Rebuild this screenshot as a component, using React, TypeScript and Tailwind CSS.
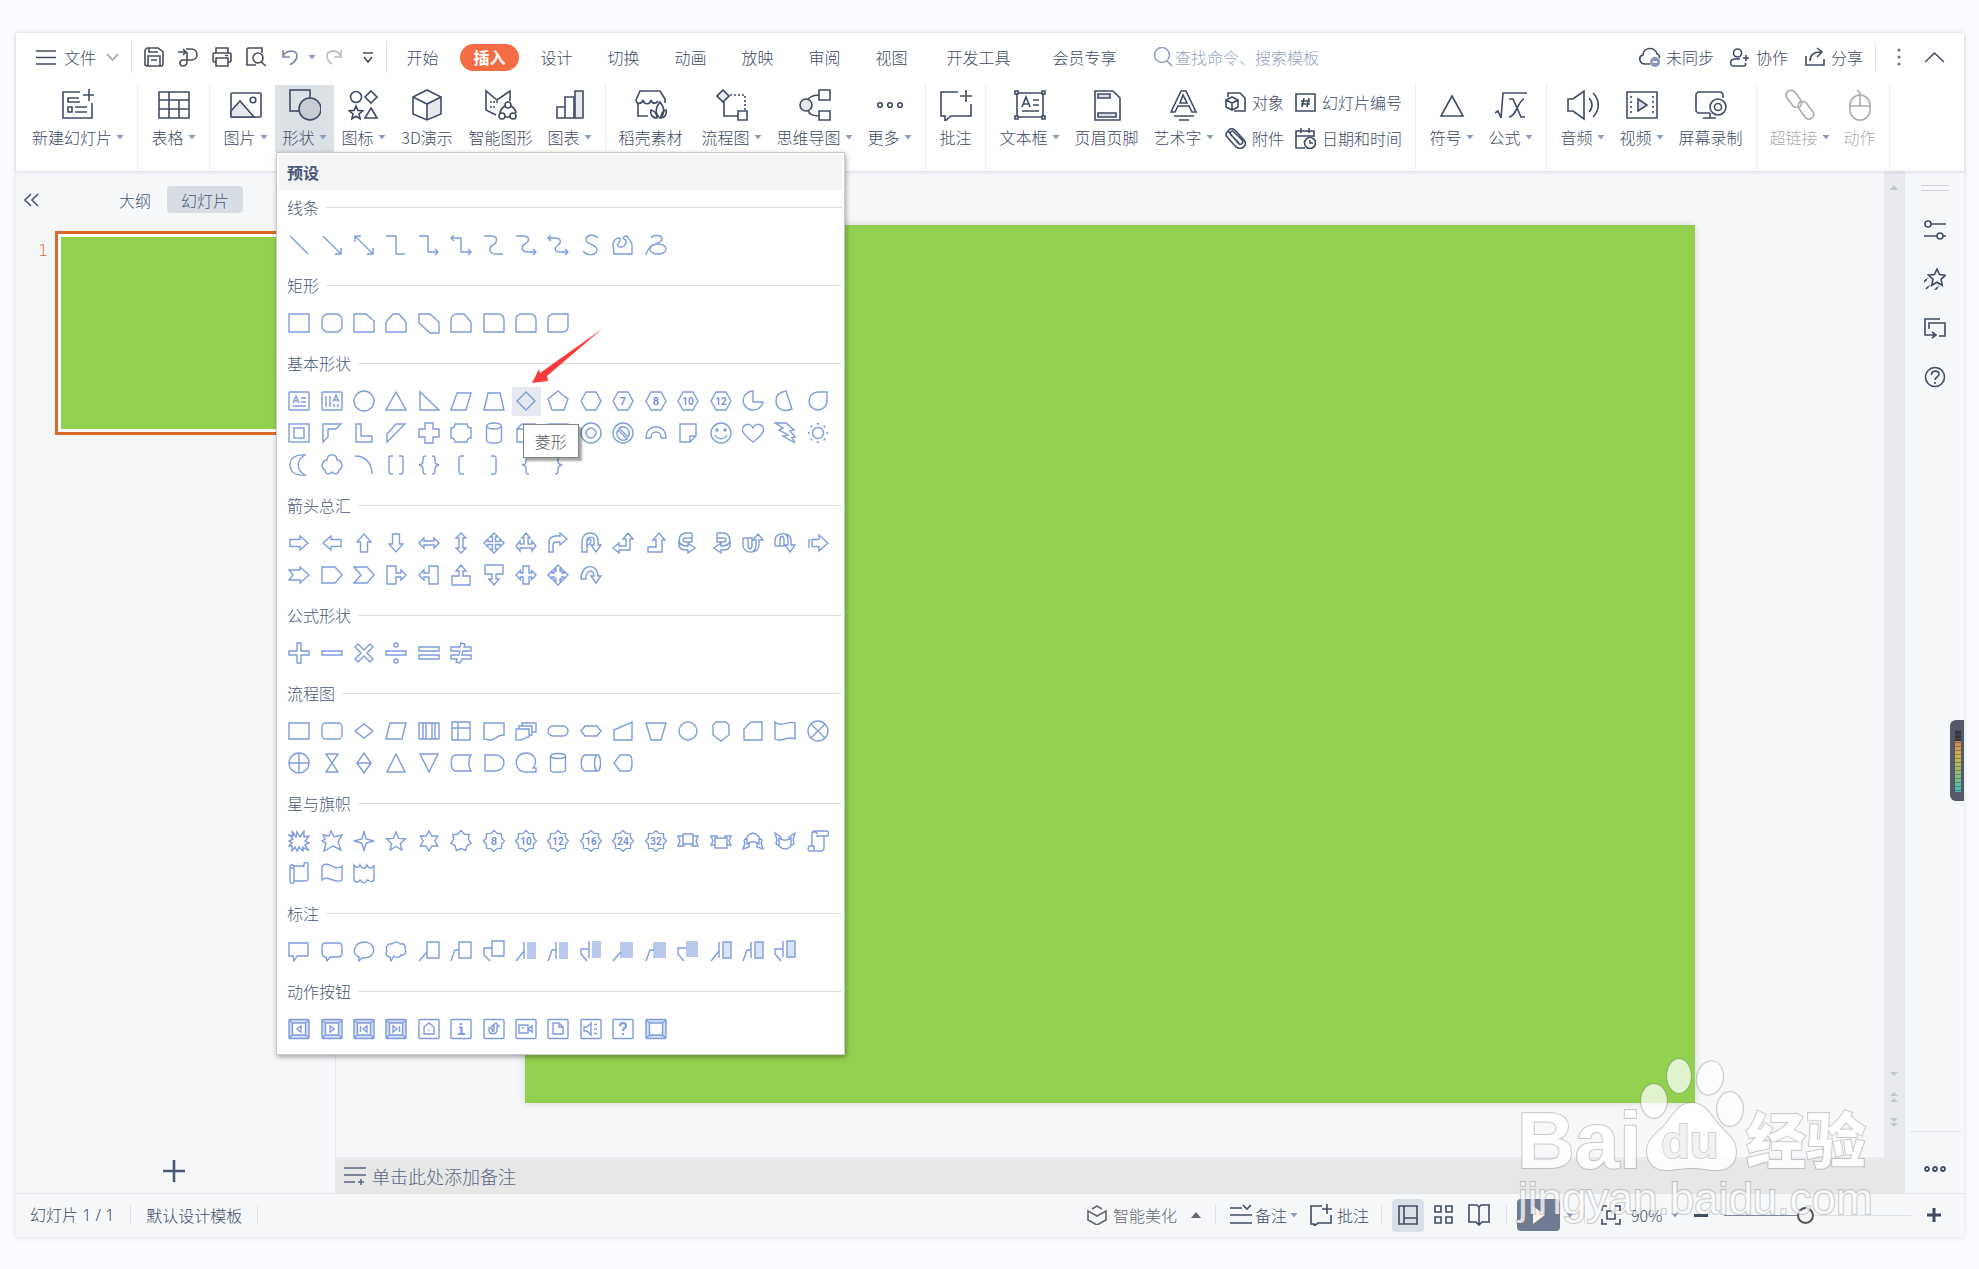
import React from "react";

type Kids = { children: React.ReactNode };

const star = (n: number, outer: number, inner: number, cx = 11, cy = 11) =>
  Array.from({ length: n * 2 }, (_, i) => {
    const r = i % 2 ? inner : outer;
    const a = (Math.PI * i) / n - Math.PI / 2;
    return `${(cx + r * Math.cos(a)).toFixed(1)},${(cy + r * Math.sin(a)).toFixed(1)}`;
  }).join(" ");

const p = (d: string) => <path d={d} />;

const turn = (deg: number, d: string) => (
  <path d={d} transform={`rotate(${deg} 11 11)`} />
);

const flip = (node: React.ReactNode) => (
  <g transform="translate(22 0) scale(-1 1)">{node}</g>
);

const num = (n: string) => (
  <text
    x="11"
    y="15"
    textAnchor="middle"
    fontSize={n.length > 1 ? 10 : 11}
    fontWeight="600"
    fill="#6f8fd4"
    stroke="none"
    fontFamily="Roboto, sans-serif"
  >
    {n}
  </text>
);

const hex = (n?: string) => (
  <>
    <path d="M6 2h10l5 9-5 9H6l-5-9z" />
    {n && num(n)}
  </>
);

const badge = (n: string) => (
  <>
    <polygon points={star(8, 10.5, 8.2)} />
    {num(n)}
  </>
);

const frame = (d: string, deep = false, weight = 1.4) => (
  <>
    <rect x="1" y="1.500" width="20" height="19" rx="1" fill={deep ? "#d3ddf4" : "none"} />
    {deep && <path d="M4.500 5h13v12h-13zM1 2l3.500 3M21 2l-3.500 3M1 20l3.500-3M21 20l-3.500-3" fill="#fff" />}
    <path d={d} strokeWidth={weight} />
  </>
);

const rightArrow = "M2 7.500h10V4l8 7-8 7v-3.500H2z";
const leftRight = "M1 11l5-5v3h10V6l5 5-5 5v-3H6v3z";
const curvedArrow =
  "M15 1H9C0 1 1 15 4 17c2 1 4 1 7 1v3l7-5-7-5v3C6 14 3 13 2 9M15 1v5H9c-4 0-4 4 0 4h6z";

const lines = [
  p("M2 2l18 18"),
  p("M2 2l18 18M20 14v6h-6"),
  p("M2 2l18 18M20 14v6h-6M2 8V2h6"),
  p("M1 2h10v18h9"),
  p("M1 2h9v16h10M17 15l3 3-3 3"),
  p("M1 4h10v14h10M4 1L1 4l3 3M18 15l3 3-3 3"),
  p("M1 2h7c8 0 6 7 2 9s-5 9 3 9h7"),
  p("M1 2h7c8 0 6 6 2 8s-4 8 3 8h8M18 15l3 3-3 3"),
  p("M1 4h7c7 0 6 5 3 7s-5 7 2 7h8M4 1L1 4l3 3M18 15l3 3-3 3"),
  p("M18 4C15 0 6 0 6 6c0 5 11 4 11 10 0 6-10 6-14 1"),
  p("M2 20L1 10C2 6 4 4 7 4c3 1 0 4-1 6-1 3 3 4 6 2 3-3 3-6 0-7-2-1 0-3 3-3l5 8v10z"),
  <>
    <path d="M6 4c2-4 11-3 11 1 0 5-11 4-14 11-1 2-2 4-2 5" />
    <ellipse cx="13" cy="15" rx="8" ry="5" />
  </>,
];

const rects = [
  p("M1 2h20v18H1z"),
  <rect x="1" y="2" width="20" height="18" rx="6" />,
  p("M1 2h12l8 7v11H1z"),
  p("M1 10l7-8h6l7 8v10H1z"),
  p("M1 2h11l9 8v11h-9L1 11z"),
  p("M1 8c0-4 3-6 6-6h7l7 8v10H1z"),
  p("M1 2h14c4 0 6 2 6 6v12H1z"),
  p("M1 20V8c0-4 2-6 6-6h8c4 0 6 2 6 6v12z"),
  p("M7 2h14v12c0 4-2 6-6 6H1V8c0-4 2-6 6-6z"),
];

const basics = [
  <>
    <rect x="1" y="2" width="20" height="18" rx="1" />
    <path d="M5 13L8 6l3 7M6 11h4M13 8h5M13 12h5M5 16h13" />
  </>,
  <>
    <rect x="1" y="2" width="20" height="18" rx="1" />
    <path d="M5 6v11M9 6v11M12 12l3-7 3 7M13 10h4M13 14v3M17 14v3" />
  </>,
  <circle cx="11" cy="11" r="10" />,
  p("M11 2l10 18H1z"),
  p("M2 2v18h19z"),
  p("M7 3h14l-5 17H1z"),
  p("M5 3h12l4 17H1z"),
  p("M11 2l9 9-9 9-9-9z"),
  p("M11 1l10 8-4 11H5L1 9z"),
  hex(),
  hex("7"),
  hex("8"),
  hex("10"),
  hex("12"),
  p("M11 1v11h10a10 9.500 0 1 1-10-11z"),
  p("M12 1l6 18C9 23 2 18 2 11 2 5 6 2 12 1z"),
  p("M20 2v9a9 9 0 1 1-9-9z"),
  <>
    <rect x="1" y="2" width="20" height="18" />
    <rect x="6" y="6" width="10" height="10" />
  </>,
  p("M2 2h18l-5 5H7v8l-5 5z"),
  p("M3 2h5v12h11v6H3z"),
  p("M11 2h9L2 20v-8z"),
  p("M7 1h8v6h6v8h-6v6H7v-6H1V7h6z"),
  p("M5 2h12c0 3 2 4 4 4v10c-2 0-4 1-4 4H5c0-3-2-4-4-4V6c2 0 4-1 4-4z"),
  <>
    <ellipse cx="11" cy="4" rx="7.500" ry="3" />
    <path d="M3.500 4v14c0 4 15 4 15 0V4" />
  </>,
  p("M2 7l5-5h13v13l-5 5H2zM2 7h13v13M15 7l5-5"),
  p("M1 2h20v18H1zM5 6h12v10H5zM1 2l4 4M21 2l-4 4M1 20l4-4M21 20l-4-4"),
  <>
    <circle cx="11" cy="11" r="10" />
    <circle cx="11" cy="11" r="5" />
  </>,
  <>
    <circle cx="11" cy="11" r="10" />
    <path d="M7 6a6.500 6.500 0 0 1 9 9zM15 17a6.500 6.500 0 0 1-9-9z" />
  </>,
  p("M1 16c0-15 20-15 20 0h-5c0-8-10-8-10 0z"),
  p("M3 2h16v12l-6 6H3zM19 14h-6v6"),
  <>
    <circle cx="11" cy="11" r="10" />
    <circle cx="7" cy="8" r="1" />
    <circle cx="15" cy="8" r="1" />
    <path d="M5 13c3 5 9 5 12 0" />
  </>,
  p("M11 20C-1 11-1 7 2 4c3-3 7-2 9 2 2-4 6-5 9-2 3 3 3 7-9 16z"),
  p("M1 1h11l8 7-4 1 5 6-3 1 3 5-12-7 5-1-9-5 4-2z"),
  <>
    <circle cx="11" cy="11" r="5.500" />
    <path
      d="M11 1v1.500M11 19.500V21M1 11h1.500M19.500 11H21M4 4l1 1M17 17l1 1M4 18l1-1M17 5l1-1"
      strokeWidth="2.500"
    />
  </>,
  p("M17 1C8 0 2 4 2 11s6 11 15 10c-9-5-9-15 0-20z"),
  p("M6 6c0-7 10-7 10 0 5 0 7 7 2 10 0 4-5 5-7 2-3 3-7 2-7-2-5-3-3-9 2-10z"),
  p("M2 2c11 0 17 8 17 18"),
  p("M8 2H6C4 2 4 3 4 4v14c0 1 0 2 2 2h2M14 2h2c2 0 2 1 2 2v14c0 1 0 2-2 2h-2"),
  p("M8 2C5 2 5 3 5 6s0 4-4 5c4 1 4 2 4 5s0 4 3 4M14 2c3 0 3 1 3 4s0 4 4 5c-4 1-4 2-4 5s0 4-3 4"),
  p("M14 2h-3c-2 0-2 1-2 3v12c0 2 0 3 2 3h3"),
  p("M8 2h3c2 0 2 1 2 3v12c0 2 0 3-2 3H8"),
  p("M14 2c-3 0-3 1-3 4s0 4-3 5c3 1 3 2 3 5s0 4 3 4"),
  p("M8 2c3 0 3 1 3 4s0 4 4 5c-4 1-4 2-4 5s0 4-3 4"),
];

const arrows = [
  p(rightArrow),
  turn(180, rightArrow),
  turn(-90, rightArrow),
  turn(90, rightArrow),
  p(leftRight),
  turn(90, leftRight),
  p("M11 1l4 4h-2.500v4.500H17V7l4 4-4 4v-2.500h-4.500V17H15l-4 4-4-4h2.500v-4.500H5V15l-4-4 4-4v2.500h4.500V5H7z"),
  p("M11 1l4 5h-2v6h4v-3l4 5-4 5v-3H5v3l-4-5 4-5v3h4V6H7z"),
  p("M2 20v-9c0-5 3-7 7-7h4V1l7 6-7 6v-3H9c-2 0-3 1-3 3v7z"),
  p("M2 20V9c0-11 16-10 16-1v5h3l-5 7-5-7h3V8c0-4-7-4-7 1v11zM7 11c0-5 4-5 4-2s-3 3-4 5v6"),
  p("M16 1l5 6h-3v11H7v3l-6-5 6-5v3h7V7h-3z"),
  p("M14 1l6 7h-3v12H3v-5h8V8H8z"),
  p(curvedArrow),
  flip(p(curvedArrow)),
  p("M1 6h5v7c0 5 4 5 4 0V6h-3M1 6v7c0 10 16 9 16 0V8h4l-5-6-5 6h3v5c0 3-1 5-3 6"),
  p("M1 14V8c0-8 16-9 16 0v5h4l-5 7-5-7h3V8c0-3-1-5-3-6M1 14h5V8c0-5 4-5 4 0v6H7"),
  p("M5 7.500h7V3l9 8-9 8v-4.500H5zM2 7v9"),
  p("M1 6h11V3l9 8-9 8v-3H1l4-5z"),
  p("M1 3h13l7 8-7 8H1z"),
  p("M1 3h13l7 8-7 8H1l7-8z"),
  p("M2 2h9v7h5V6l5 5-5 5v-3h-5v7H2z"),
  flip(p("M2 2h9v7h5V6l5 5-5 5v-3h-5v7H2z")),
  turn(-90, "M1 2h9v7h5V6l6 5-6 5v-3h-5v7H1z"),
  turn(90, "M1 2h9v7h5V6l6 5-6 5v-3h-5v7H1z"),
  p("M8 2h6v7h2.500V6.500l4.500 4.500-4.500 4.500V13H14v7H8v-7H5.500v2.500L1 11l4.500-4.500V9H8z"),
  p("M11 1l4 4h-2v2h2v2h2V7l4 4-4 4v-2h-2v2h-2v2h2l-4 4-4-4h2v-2H7v-2H5v2l-4-4 4-4v2h2V7h2V5H7z"),
  p("M1 15C1-1 18-1 18 12h3l-5 7-5-7h3c0-7-8-7-8 3z"),
];

const formulas = [
  p("M9 1h4v8h8v4h-8v8H9v-8H1V9h8z"),
  p("M1 9h20v4H1z"),
  p("M5 2l6 6 6-6 3 3-6 6 6 6-3 3-6-6-6 6-3-3 6-6-6-6z"),
  <>
    <path d="M1 9h20v4H1z" />
    <circle cx="11" cy="3" r="2" />
    <circle cx="11" cy="19" r="2" />
  </>,
  p("M1 5h20v4H1zM1 13h20v4H1z"),
  p("M1 5h9l1-4 4 1-1 3h7v4h-8l-1 4h9v4h-9l-2 4-4-1 1-3H1v-4h8l1-4H1z"),
];

const flows = [
  p("M1 3h20v16H1z"),
  <rect x="1" y="3" width="20" height="16" rx="4" />,
  p("M11 4l9 7-9 7-9-7z"),
  p("M5 3h16l-4 16H1z"),
  p("M1 3h20v16H1zM5 3v16M8 3v16M14 3v16M17 3v16"),
  p("M2 2h18v18H2zM2 8h18M8 2v18"),
  p("M1 3h20v12c-8-1-8 6-14 5-3 0-4-1-6-1z"),
  p("M1 9h13v8c-4 0-6 4-13 3zM4 9V6h13v9h-3M7 6V3h14v9h-4"),
  <rect x="1" y="6" width="20" height="10" rx="5" />,
  p("M5 6h12l4 5-4 5H5l-4-5z"),
  p("M2 10l18-8v18H2z"),
  p("M1 3h20l-5 17H6z"),
  <circle cx="11" cy="11" r="9" />,
  p("M6 2h10l3 3v10l-8 6-8-6V5z"),
  p("M9 2h11v18H2V9z"),
  p("M1 2c6 6 13-2 20 1v16c-7-4-14 4-20 0z"),
  <>
    <circle cx="11" cy="11" r="10" />
    <path d="M4 4l14 14M18 4L4 18" />
  </>,
  <>
    <circle cx="11" cy="11" r="10" />
    <path d="M1 11h20M11 1v20" />
  </>,
  p("M5 2h12L5 20h12z"),
  p("M11 1l7 10-7 10-7-10zM4 11h14"),
  p("M11 2l9 18H2z"),
  p("M2 2h18l-9 18z"),
  p("M5 3h16c-3 4-3 12 0 16H5C0 18 0 4 5 3z"),
  p("M2 3h10c12 0 12 16 0 16H2z"),
  p("M20 20H11C-2 20-2 1 11 1c9 0 12 9 7 15h3v4z"),
  <>
    <ellipse cx="11" cy="4" rx="7.500" ry="2.500" />
    <path d="M3.500 4v14c0 3 15 3 15 0V4" />
  </>,
  <>
    <ellipse cx="17.500" cy="11" rx="3" ry="8" />
    <path d="M17 3H5C0 5 0 17 5 19h12" />
  </>,
  p("M8 3h9c4 0 4 16 0 16H8l-6-8z"),
];

const stars = [
  p("M4 1l4 6 1-5 3 5 4-6v6l5-1-4 5 4 2-4 2 4 6-6-4 0 4-4-4-2 4-2-4-3 4v-5H1l3-3-3-2 4-2-4-4 4 1z"),
  p("M10 1l3 6 8-2-4 7 3 8-8-4-9 5 2-8-4-2 3-2-2-4 6 1z"),
  p("M11 1l2 8 8 2-8 2-2 8-2-8-8-2 8-2z"),
  <polygon points={star(5, 10, 4.5, 11, 12)} />,
  <polygon points={star(6, 10, 5.8)} />,
  <polygon points={star(7, 10.5, 7.5)} />,
  badge("8"),
  badge("10"),
  badge("12"),
  badge("16"),
  badge("24"),
  badge("32"),
  p("M6 4h10v10H6zM6 6H1l2 5-2 5h6v-2M16 6h5l-2 5 2 5h-6v-2"),
  p("M5 8h12v10H5zM5 15H1l2-4-2-5h6v2M17 15h4l-2-4 2-5h-6v2"),
  p("M5 7c4-5 8-5 12 0v7c-4-3-8-3-12 0zM5 8c-2 1-3 2-3 3l1 2-2 6 6-2v-4M17 8c2 1 3 2 3 3l-1 2 2 6-6-2v-4"),
  p("M5 8c4 3 8 3 12 0v8c-4 4-8 4-12 0zM5 15c-2 0-3-1-3-2l1-3-2-7 6 4v2M17 15c2 0 3-1 3-2l-1-3 2-7-6 4v2"),
  p("M5 16V4c0-3 5-3 5 0M5 4c0-2 1-3 3-3h12c2 0 2 5 0 5H9M17 6v12c0 2-1 3-3 3H3c-3 0-2-5 0-5h4v4"),
  p("M2 5c0-3 4-3 4 0v14c0 3-4 3-4 0zM6 4h10M6 19h10c3 0 4-1 4-3V2c0-2-4-2-4 0v3M2 6h4"),
  p("M1 4c7-6 12 6 20 0v14c-7 5-13-6-20 0z"),
  p("M1 3c3 4 5 3 6 0 2 5 6 4 7 0 2 4 5 4 7 0v15c-3 4-4 0-7 0-2 4-5 3-7 0-2 3-4 3-6 0z"),
];

const callouts = [
  p("M1 3h19v13H9l-3 5-1-5H1z"),
  p("M5 3h12c3 0 4 1 4 4v6c0 3-1 4-4 4H9l-3 4-1-4c-3 0-4-1-4-4V7c0-3 1-4 4-4z"),
  p("M6 17C-2 13 1 3 11 2c13 0 13 16 0 16H9l-3 3z"),
  p("M5 17c-3 0-5-3-3-6-2-4 1-8 5-7 3-3 7-2 8 0 4-1 6 2 5 5 2 4-1 7-4 6-2 3-5 3-7 1l-3 5z"),
  p("M9 2h12v16H9zM9 12l-8 9"),
  p("M9 2h12v16H9zM9 10H5L1 21"),
  p("M9 1h12v15H9zM9 8H1v7l6 6"),
  <>
    <path d="M12 2h9v17h-9z" fill="#b9c9ec" stroke="none" />
    <path d="M9 2v17M9 11l-8 10" />
  </>,
  <>
    <path d="M12 2h9v17h-9z" fill="#b9c9ec" stroke="none" />
    <path d="M9 2v17M9 10H5L1 21" />
  </>,
  <>
    <path d="M12 1h9v17h-9z" fill="#b9c9ec" stroke="none" />
    <path d="M9 1v17M9 9H1v5l6 7" />
  </>,
  <>
    <path d="M8 2h13v16H8z" fill="#b9c9ec" stroke="none" />
    <path d="M9 12l-8 9" />
  </>,
  <>
    <path d="M8 2h13v16H8z" fill="#b9c9ec" stroke="none" />
    <path d="M9 10H5L1 21" />
  </>,
  <>
    <path d="M9 1h12v16H9z" fill="#b9c9ec" stroke="none" />
    <path d="M9 8H1v6l6 7" />
  </>,
  <>
    <path d="M13 2h8v16h-8z" fill="#dbe4f7" />
    <path d="M9 2v16M9 11l-8 10" />
  </>,
  <>
    <path d="M13 2h8v16h-8z" fill="#dbe4f7" />
    <path d="M9 2v16M9 10H5L1 21" />
  </>,
  <>
    <path d="M13 1h8v16h-8z" fill="#dbe4f7" />
    <path d="M9 1v16M9 9H1v5l6 7" />
  </>,
];

const actions = [
  frame("M13 8v6l-4-3z", true),
  frame("M9 8v6l4-3z", true),
  frame("M14 8v6l-4-3zM7.500 8v6", true),
  frame("M8 8v6l4-3zM14.500 8v6", true),
  frame("M6 9l5-4 5 4v7H6zM11 12v1"),
  frame("M9 9.500h2.500V16M8 16h7M11 5v2", false, 2.2),
  frame("M13 5l3 3h-2v4c0 5-8 5-8 0v-2h3v2c0 2 2 2 2 0V8H9z"),
  frame("M4 7h9v8H4zM13 11l4-3v6zM7 10h2"),
  frame("M6 5h6l4 4v7H6zM12 5v4h4"),
  frame("M4 9h3l4-4v12l-4-4H4zM14 7l3-1M14 11h3M14 15l3 1"),
  frame("M8 8c0-4 6-4 6 0 0 2-3 2-3 5M11 15v2", false, 2.2),
  frame("", true),
];

const sections = [
  { title: "线条", shapes: lines },
  { title: "矩形", shapes: rects },
  { title: "基本形状", shapes: basics },
  { title: "箭头总汇", shapes: arrows },
  { title: "公式形状", shapes: formulas },
  { title: "流程图", shapes: flows },
  { title: "星与旗帜", shapes: stars },
  { title: "标注", shapes: callouts },
  { title: "动作按钮", shapes: actions },
];

const Icon = ({ children, size = 32 }: Kids & { size?: number }) => (
  <svg
    width={size}
    height={size}
    viewBox={`0 0 ${size} ${size}`}
    fill="none"
    stroke="currentColor"
    strokeWidth="1.6"
    className="shrink-0"
    aria-hidden="true"
  >
    {children}
  </svg>
);

const Caret = () => (
  <svg width="8" height="5" viewBox="0 0 8 5" className="shrink-0" aria-hidden="true">
    <path d="M0.500 0h7L4 4.500z" fill="#8b9cbd" />
  </svg>
);

const Sep = () => <div className="mx-[6px] h-[85px] w-px shrink-0 self-start bg-[#ececee]" />;

type ToolProps = Kids & {
  label: string;
  w: string;
  caret?: boolean;
  active?: boolean;
  muted?: boolean;
};

const Tool = ({ label, w, caret, active, muted, children }: ToolProps) => (
  <button
    className={`flex h-[67px] shrink-0 flex-col items-center ${w} ${active ? "bg-[#dce1e6]" : ""} ${
      muted ? "text-[#aaacb0]" : "text-[#404b64]"
    }`}
  >
    <span className="flex h-10 items-center">
      <Icon>{children}</Icon>
    </span>
    <span className="flex h-6 items-center gap-1 whitespace-nowrap">
      {label}
      {caret && <Caret />}
    </span>
  </button>
);

const ShapeMenu = () => (
  <div className="absolute left-px top-[67px] z-20 w-[569px] border border-[#c9cbce] bg-white p-[2px] text-[#4a5878] shadow-[1px_2px_5px_rgba(0,0,0,0.35)]">
    <h2 className="flex h-[35px] items-center bg-[#f3f4f6] pb-[2px] pl-2 font-bold">预设</h2>
    {sections.map((s) => (
      <section key={s.title} className="pb-[7px]">
        <div className="mb-[5px] flex h-[34px] items-center gap-[7px] pl-2">
          <h3>{s.title}</h3>
          <div className="h-px flex-1 bg-[#dddfe1]" />
        </div>
        <div className="grid grid-cols-17 pl-1 pr-2">
          {s.shapes.map((shape, i) => (
            <div key={i} className="relative flex h-8 items-center justify-center">
              <button
                aria-label={`${s.title} ${i + 1}`}
                className={`flex size-[29px] items-center justify-center ${
                  s.title === "基本形状" && i === 7 ? "bg-[#e6e9ef]" : ""
                }`}
              >
                <svg
                  width="22"
                  height="22"
                  viewBox="0 0 22 22"
                  fill="none"
                  stroke="#7f9cdb"
                  strokeWidth="1.4"
                >
                  {shape}
                </svg>
              </button>
              {s.title === "基本形状" && i === 7 && (
                <>
                  <svg
                    width="72"
                    height="56"
                    viewBox="0 0 72 56"
                    className="absolute bottom-[33px] left-[21px] z-10"
                    aria-hidden="true"
                  >
                    <path d="M1 55L8 41l1 4L71 1 16 48l1 5z" fill="#fb3b3b" />
                  </svg>
                  <div
                    role="tooltip"
                    className="absolute left-[13px] top-[39px] z-10 flex h-[34px] w-14 items-center justify-center whitespace-nowrap border border-[#858585] bg-white pb-px text-[#575757] shadow-[3px_3px_2px_rgba(0,0,0,0.35)]"
                  >
                    菱形
                  </div>
                </>
              )}
            </div>
          ))}
        </div>
      </section>
    ))}
  </div>
);

const tabs = ["开始", "插入", "设计", "切换", "动画", "放映", "审阅", "视图"];

const TopBar = () => (
  <div className="flex h-[50px] items-center pb-[2px] text-[#4a4f5e]">
    <button className="ml-5 flex items-center gap-2 text-[#404b64]">
      <Icon size={20}>
        <path d="M0 4h20M0 10.500h20M0 17h20" />
      </Icon>
      文件
      <svg width="13" height="8" viewBox="0 0 13 8" fill="none" stroke="#999" strokeWidth="1.3" className="ml-[2px]">
        <path d="M1 1l5.500 6L12 1" />
      </svg>
    </button>
    <div className="ml-3 h-8 w-px bg-[#e3e4e6]" />
    <div className="ml-3 flex items-center gap-[14px]">
      <button aria-label="保存">
        <Icon size={20}>
          <path d="M3 1h11l5 4v12l-1 2H3l-2-1V3zM5 1v4h9M4 19V9h12v10M7 13h6" />
        </Icon>
      </button>
      <button aria-label="输出">
        <Icon size={20}>
          <path d="M0 5h8M5 2l3 3-3 3M8 2h5c8 0 8 11 0 11H5c-4 0-4 6 0 6s4-3 4-6V5" />
        </Icon>
      </button>
      <button aria-label="打印">
        <Icon size={20}>
          <path d="M4 6V1h12v5M4 15H2l-1-1V7l1-1h16l1 1v7l-1 1h-2M4 11h12v8H4zM13 8.500h3" />
        </Icon>
      </button>
      <button aria-label="打印预览">
        <Icon size={20}>
          <path d="M16 6V1H2L1 2v16h9M15 15l5 4" />
          <circle cx="12" cy="11" r="5" />
        </Icon>
      </button>
    </div>
    <button aria-label="撤销" className="ml-4 flex items-center gap-[10px] text-[#7f89a3]">
      <Icon size={16}>
        <path d="M1 1v7h7M1 7c4-7 14-6 14 0 0 4-3 6-7 9" />
      </Icon>
      <Caret />
    </button>
    <button aria-label="恢复" className="ml-[10px] text-[#b9bbc0]">
      <Icon size={16}>
        <path d="M15 1v7H8M15 7C11 0 1 1 1 7c0 4 2 6 5 8" />
      </Icon>
    </button>
    <button aria-label="更多命令" className="ml-5">
      <Icon size={12}>
        <path d="M1 2h10M2 6l4 5 4-5" />
      </Icon>
    </button>
    <div className="ml-3 h-8 w-px bg-[#e3e4e6]" />
    <nav className="ml-[2px] flex text-[#404b64]">
      {tabs.map((t) => (
        <button key={t} className="flex w-[67px] justify-center whitespace-nowrap">
          <span
            className={
              t === "插入"
                ? "flex h-[27px] w-[59px] items-center justify-center rounded-full bg-[#f56d44] font-bold text-white"
                : "flex h-[27px] items-center"
            }
          >
            {t}
          </span>
        </button>
      ))}
      <button className="w-[107px]">开发工具</button>
      <button className="w-[105px]">会员专享</button>
    </nav>
    <label className="ml-4 flex items-center gap-[2px] text-[#97a3bd]">
      <Icon size={20}>
        <circle cx="9" cy="8" r="7.500" />
        <path d="M14 14l5 5" />
      </Icon>
      <input
        type="text"
        aria-label="查找命令"
        placeholder="查找命令、搜索模板"
        className="w-40 outline-none placeholder:text-[#97a3bd]"
      />
    </label>
    <div className="ml-auto flex items-center text-[#404b64]">
      <button className="flex items-center gap-[5px]">
        <Icon size={22}>
          <path d="M11 18H6c-6 0-7-8-2-9C4 1 16 0 18 8c2 0 3 3 2 4" />
          <circle cx="16" cy="16" r="5" fill="#8796b8" stroke="none" />
          <path d="M13.500 16h5" stroke="#fff" />
        </Icon>
        未同步
      </button>
      <button className="ml-4 flex items-center gap-[7px]">
        <Icon size={19}>
          <circle cx="7.500" cy="5" r="4" />
          <path d="M10 11H5c-6 0-5 7-2 7h10c3 0 3-2 2-3M13 10h6M16 7v6" />
        </Icon>
        协作
      </button>
      <button className="ml-[17px] flex items-center gap-[6px]">
        <Icon size={20}>
          <path d="M1 9v9h18v-6M5 14c0-6 4-9 11-9M12 1l5 4-5 5" />
        </Icon>
        分享
      </button>
      <div className="ml-3 h-7 w-px bg-[#e3e4e6]" />
      <button aria-label="选项" className="ml-[21px]">
        <svg width="4" height="18" fill="#66708a">
          <circle cx="2" cy="2" r="1.500" />
          <circle cx="2" cy="9" r="1.500" />
          <circle cx="2" cy="16" r="1.500" />
        </svg>
      </button>
      <button aria-label="折叠功能区" className="ml-6 mr-5">
        <Icon size={19}>
          <path d="M0 14l9.500-9 9.500 9" />
        </Icon>
      </button>
    </div>
  </div>
);

const Small = ({ label, children }: Kids & { label: string }) => (
  <button className="flex h-9 items-center gap-[6px] whitespace-nowrap text-[#404b64]">
    <Icon size={21}>{children}</Icon>
    {label}
  </button>
);

const Ribbon = () => (
  <div className="relative z-20 flex h-[88px] pl-[9px] pt-px">
    <Tool label="新建幻灯片" w="mt-px w-[106px]" caret>
      <path d="M18 3H1v26h29V14M27 0v12M21 6h11M17 9H6v4h12M13 18h12M13 23h12M6 18h4v5H6z" />
    </Tool>
    <Sep />
    <Tool label="表格" w="mt-px w-[59px]" caret>
      <path d="M1 3h30v26H1zM1 11h30M1 20h30M11 3v26M21 11v18" />
    </Tool>
    <Sep />
    <Tool label="图片" w="mt-px w-[59px]" caret>
      <rect x="1" y="4" width="30" height="24" rx="1" />
      <path d="M1 22l9-10 14 16H1z" fill="#e7e8ee" />
      <circle cx="23" cy="11" r="2.800" />
    </Tool>
    <div className="relative mt-px">
      <Tool label="形状" w="w-[59px]" caret active>
        <rect x="1" y="1" width="20" height="21" />
        <circle cx="21" cy="20" r="11" fill="#c8ccd5" />
      </Tool>
      <ShapeMenu />
    </div>
    <Tool label="图标" w="mt-px w-[59px]" caret>
      <circle cx="8" cy="8" r="5.500" />
      <path d="M23 2l6 6-6 6-6-6zM23 19l6 10H17z" />
      <polygon points={star(5, 7, 3.2, 8, 24)} />
    </Tool>
    <Tool label="3D演示" w="mt-px w-[68px]">
      <path d="M16 15L30 8v17L16 31z" fill="#e7e8ee" stroke="none" />
      <path d="M16 1l14 7v17l-14 6-14-6V8zM2 8l14 7 14-7M16 15v16" />
    </Tool>
    <Tool label="智能图形" w="mt-px w-[79px]">
      <path d="M11 26L1 21V2l11 9L25 2v10" />
      <path d="M5 13h9M5 18h6" strokeDasharray="2 1" />
      <circle cx="23" cy="16" r="3" />
      <circle cx="17" cy="27" r="3" />
      <circle cx="28" cy="27" r="3" />
      <path d="M20 17c-3 2-5 4-5 7M26 17c3 2 5 4 5 7M20 28h5" />
    </Tool>
    <Tool label="图表" w="mt-px w-[59px]" caret>
      <path d="M21 2h8v27h-8z" fill="#e7e8ee" />
      <path d="M3 18h8v11H3zM11 8h9v21h-9z" />
    </Tool>
    <Sep />
    <Tool label="稻壳素材" w="mr-[5px] mt-px w-[77px]">
      <path d="M1 11l4-9h20l5 8v4M1 11c0 5 6 4 7 0 1 5 7 5 8 0 1 4 5 4 7 1M3 15v12h10M25 29c-5-4-5-10 0-16 5 6 5 12 0 16zM22 29c-5 0-7-4-6-8 4 1 6 4 6 8zM26 29c4 0 6-4 5-8-4 1-5 5-5 8z" />
    </Tool>
    <Tool label="流程图" w="mt-px w-[75px]" caret>
      <path d="M7 1l6 6-6 6-6-6z" fill="#e7e8ee" />
      <path d="M8 13v14h14M22 22h9v9h-9z" />
      <path d="M14 6h15v15" strokeDasharray="2 2" />
    </Tool>
    <Tool label="思维导图" w="mt-px w-[91px]" caret>
      <circle cx="7" cy="16" r="6" fill="#e7e8ee" />
      <path d="M20 1h11v10H20zM20 22h11v9H20zM20 6c-7 0-9 2-11 4M20 27c-7 0-9-2-11-5" />
    </Tool>
    <Tool label="更多" w="mt-px w-[59px]" caret>
      <circle cx="6" cy="16" r="2.300" />
      <circle cx="16" cy="16" r="2.300" />
      <circle cx="26" cy="16" r="2.300" />
    </Tool>
    <Sep />
    <Tool label="批注" w="mt-px w-[47px]">
      <path d="M18 3H1v24h4v5l6-5h20V15M26 1v12M20 7h12" />
    </Tool>
    <Sep />
    <Tool label="文本框" w="mt-px w-[75px]" caret>
      <path d="M3 4h26v24H3zM8 18l4-10 4 10M9 15h6M19 11h6M19 16h6M8 22h17" />
      <path d="M1 2h3v3H1zM28 2h3v3h-3zM1 27h3v3H1zM28 27h3v3h-3z" fill="#fff" />
    </Tool>
    <Tool label="页眉页脚" w="mt-px w-[79px]">
      <path d="M4 2h18l7 7v22H4z" />
      <path d="M7 5h12v4H7zM7 24h18v4H7z" fill="#dfe1e8" />
    </Tool>
    <Tool label="艺术字" w="mt-px w-[75px]" caret>
      <path d="M3 23L13 2h5l10 21h-4l-3-6H10l-3 6zM12 14h7l-4-8zM6 27h20M11 31h10" />
    </Tool>
    <div className="grid w-[188px] grid-cols-[auto_auto] content-start justify-start gap-x-[11px] pl-1">
      <Small label="对象">
        <path d="M3 5V1h12l5 5v13H9M7 5l6 3v7l-6 3-6-3V8zM1 8l6 3 6-3M7 11v7" />
      </Small>
      <Small label="幻灯片编号">
        <path d="M1 2h19v17H1zM9 6l-2 9M14 6l-2 9M6 9h9M6 12h9" />
      </Small>
      <Small label="附件">
        <path d="M3 3l10 12c3 3 6 0 4-3L9 4C7 2 4 4 6 7l8 8M3 3c-3 3-2 5 0 7l8 9c6 4 12-2 8-7l-8-9C8 0 5 0 3 3" />
      </Small>
      <Small label="日期和时间">
        <path d="M10 20H1V3h18v6M1 8h18M6 0v5M14 0v5" />
        <circle cx="15" cy="15" r="5.500" />
        <path d="M15 12v3h3" />
      </Small>
    </div>
    <Sep />
    <Tool label="符号" w="mt-px w-[59px]" caret>
      <path d="M16 7l11 20H5z" />
    </Tool>
    <Tool label="公式" w="mt-px w-[59px]" caret>
      <path d="M0 24l3-2 3 7L8 4h24M14 10h4l8 18h4M29 10c-5 0-8 18-15 18" />
    </Tool>
    <Sep />
    <Tool label="音频" w="mt-px w-[59px]" caret>
      <path d="M1 10h5l11-8v28L6 22H1zM22 9c4 4 4 10 0 14M26 4c7 7 7 17 0 24" />
    </Tool>
    <Tool label="视频" w="mt-px w-[59px]" caret>
      <path d="M1 3h30v26H1z" />
      <path d="M12 10l9 6-9 6z" fill="#dfe1e8" />
      <path d="M5 7v19M27 7v19" strokeDasharray="2 3" />
    </Tool>
    <Tool label="屏幕录制" w="mt-px w-[79px]">
      <path d="M15 24H3l-2-2V5l2-2h23l2 2v4M15 24v5M8 29h13" />
      <circle cx="23" cy="18" r="8" fill="#fff" />
      <circle cx="23" cy="18" r="3.500" />
    </Tool>
    <Sep />
    <Tool label="超链接" w="mt-px w-[73px]" caret muted>
      <path d="M13 18c-2 1-3 0-4-1L3 9c-4-6 4-10 8-6l5 7c3 4 1 8-2 9M18 13c2-1 4 0 5 2l6 8c3 5-4 10-8 5l-5-7c-3-3-2-7 1-9" />
    </Tool>
    <Tool label="动作" w="mt-px w-[47px]" muted>
      <rect x="6" y="6" width="20" height="25" rx="10" />
      <path d="M6 17h20M16 17V4l-3-3" />
    </Tool>
    <Sep />
  </div>
);

const SlidePanel = () => (
  <aside className="flex w-80 shrink-0 flex-col border-r border-[#e6e7ea] text-[#4a5878]">
    <div className="mb-[3px] flex h-[57px] items-center">
      <button aria-label="收起" className="ml-2">
        <Icon size={16}>
          <path d="M7 2L1 8l6 6M14 2L8 8l6 6" />
        </Icon>
      </button>
      <button className="ml-[79px]">大纲</button>
      <button className="ml-4 h-[27px] w-[76px] rounded bg-[#d8dde4]">幻灯片</button>
    </div>
    <div className="flex">
      <span className="w-[39px] pl-[22px] pt-2 font-[DejaVu_Sans] text-[#dc6a2b]">1</span>
      <button aria-label="幻灯片 1" className="h-[204px] border-[3px] border-[#dc6a2b] bg-white p-[3px]">
        <span className="block aspect-[4/3] h-full bg-[#92d14f]" />
      </button>
    </div>
    <button aria-label="新建幻灯片" className="mb-[11px] ml-[147px] mt-auto w-[22px]">
      <Icon size={22}>
        <path d="M11 0v22M0 11h22" strokeWidth="2.600" />
      </Icon>
    </button>
  </aside>
);

const ScrollBar = () => (
  <div className="flex w-5 shrink-0 flex-col items-center bg-[#e8eaef] pt-[14px] text-[#c4c7cd]">
    <svg width="8" height="5" fill="currentColor">
      <path d="M0 5l4-5 4 5z" />
    </svg>
    <svg width="8" height="55" fill="currentColor" className="mb-[30px] mt-auto">
      <path d="M0 0h8L4 4zM0 24l4-4 4 4zM0 30l4-4 4 4zM0 46h8l-4 4zM0 51h8l-4 4z" />
    </svg>
  </div>
);

const SideRail = () => (
  <aside className="relative flex w-[60px] shrink-0 flex-col items-center border-l border-[#e1e4ea] text-[#404b64]">
    <div className="mt-[14px] h-[6px] w-7 border-y border-[#cfd1d4]" />
    <div className="mt-7 flex flex-col gap-[27px]">
      <button aria-label="属性">
        <Icon size={22}>
          <circle cx="4" cy="5" r="3" />
          <circle cx="16" cy="17" r="3" />
          <path d="M7 5h15M0 17h13M19 17h3" />
        </Icon>
      </button>
      <button aria-label="动画">
        <Icon size={22}>
          <polygon points={star(5, 9, 4.2, 13, 10)} />
          <path d="M0 14l4-4M2 21l4-4M11 22l4-4" strokeDasharray="4 1" />
        </Icon>
      </button>
      <button aria-label="切换">
        <Icon size={22}>
          <path d="M16 2H1v16h10M8 15l4 3-4 3M5 12V6h16v13h-6" />
        </Icon>
      </button>
      <button aria-label="帮助">
        <Icon size={22}>
          <circle cx="11" cy="11" r="9.500" />
          <path d="M7.500 9c0-5 7.500-5 7.500-1 0 3-4 3-4 6M11 16v2" />
        </Icon>
      </button>
    </div>
    <div className="absolute right-0 top-[549px] flex h-[81px] w-[14px] items-center rounded-l-md bg-[#545868] pl-[5px]">
      <svg width="6" height="62" aria-hidden="true">
        <defs>
          <linearGradient id="level" x1="0" y1="0" x2="0" y2="1">
            <stop offset="0" stopColor="#33363f" />
            <stop offset="0.17" stopColor="#33363f" />
            <stop offset="0.18" stopColor="#d9804f" />
            <stop offset="0.4" stopColor="#d4b33f" />
            <stop offset="0.62" stopColor="#a5bd58" />
            <stop offset="0.8" stopColor="#6fc48d" />
            <stop offset="1" stopColor="#3fb9b5" />
          </linearGradient>
        </defs>
        <rect width="6" height="62" fill="url(#level)" />
        <path d="M3 0v62" stroke="#545868" strokeWidth="6" strokeDasharray="1 3" opacity="0.6" />
      </svg>
    </div>
    <button
      aria-label="更多"
      className="mt-auto flex h-[62px] w-[52px] items-center justify-center border-t border-[#e1e3e6] pt-3"
    >
      <svg width="22" height="6" fill="none" stroke="currentColor" strokeWidth="1.8">
        <circle cx="3" cy="3" r="2" />
        <circle cx="11" cy="3" r="2" />
        <circle cx="19" cy="3" r="2" />
      </svg>
    </button>
  </aside>
);

const Bar = () => <div className="h-5 w-px bg-[#e0e2e6]" />;

const StatusBar = () => (
  <footer className="flex h-11 shrink-0 items-center border-t border-[#e3e5e8] pb-px pl-[14px] text-[#404b64]">
    <span className="font-['Noto_Sans','Noto_Sans_CJK_SC',sans-serif]">幻灯片 1 / 1</span>
    <div className="ml-4 flex items-center gap-[15px]">
      <Bar />
      <span>默认设计模板</span>
      <Bar />
    </div>
    <div className="ml-auto flex items-center">
      <button className="flex items-center gap-[6px] text-[#66686c]">
        <Icon size={20}>
          <path d="M5 4l5-3 5 3M1 6v9l9 5 9-5V6l-9 5zM10 11v1" />
        </Icon>
        智能美化
        <svg width="10" height="6" fill="currentColor" className="ml-2">
          <path d="M0 6l5-6 5 6z" />
        </svg>
      </button>
      <div className="ml-[14px]">
        <Bar />
      </div>
      <button className="ml-[14px] flex items-center gap-[3px]">
        <Icon size={22}>
          <path d="M0 4h12M0 11h22M0 19h22M13 1l4 4 4-4" />
        </Icon>
        备注
        <Caret />
      </button>
      <button className="ml-3 flex items-center gap-[5px]">
        <Icon size={22}>
          <path d="M12 2H1v18h3v2l4-3h13v-8M17 0v10M12 5h10" />
        </Icon>
        批注
      </button>
      <div className="ml-3">
        <Bar />
      </div>
      <button aria-label="普通视图" className="ml-[10px] flex h-[33px] w-8 items-center justify-center rounded-sm bg-[#dbe0e6]">
        <Icon size={20}>
          <path d="M1 1h18v18H1zM6 1v18M6 13h13" />
        </Icon>
      </button>
      <button aria-label="幻灯片浏览" className="ml-[10px]">
        <Icon size={20}>
          <path d="M1 1h6v6H1zM12 1h6v6h-6zM1 12h6v6H1zM12 12h6v6h-6z" />
        </Icon>
      </button>
      <button aria-label="阅读视图" className="ml-[14px]">
        <Icon size={22}>
          <path d="M11 3L9 1H1v17h7l3 3 3-3h7V1h-8zM11 3v18" />
        </Icon>
      </button>
      <div className="ml-4">
        <Bar />
      </div>
      <button aria-label="放映" className="ml-[10px] flex h-8 w-[43px] items-center justify-center rounded-sm bg-[#717a93]">
        <svg width="12" height="18" fill="#fdf1ea">
          <path d="M0 0l12 9-12 9z" />
        </svg>
      </button>
      <div className="ml-[6px]">
        <Caret />
      </div>
      <div className="ml-[10px]">
        <Bar />
      </div>
      <button aria-label="适应窗口" className="ml-4">
        <Icon size={20}>
          <path d="M1 6V1h5M14 1h5v5M19 14v5h-5M6 19H1v-5M6 6h8v8H6z" />
        </Icon>
      </button>
      <button className="ml-[10px] flex w-12 items-center justify-between">
        90%
        <Caret />
      </button>
      <button aria-label="缩小" className="ml-[15px] h-[3px] w-[14px] bg-[#404b64]" />
      <input
        type="range"
        aria-label="缩放"
        min="0"
        max="1000"
        defaultValue="427"
        className="ml-4 h-[17px] w-[187px] appearance-none bg-[linear-gradient(90deg,#7c869f_43%,#dcdfe4_43%)] bg-[length:100%_1px] bg-center bg-no-repeat [&::-webkit-slider-thumb]:size-[17px] [&::-webkit-slider-thumb]:appearance-none [&::-webkit-slider-thumb]:rounded-full [&::-webkit-slider-thumb]:border-2 [&::-webkit-slider-thumb]:border-[#555] [&::-webkit-slider-thumb]:bg-[#f2f2f2]"
      />
      <button aria-label="放大" className="ml-4 mr-[23px]">
        <Icon size={14}>
          <path d="M7 0v14M0 7h14" strokeWidth="3" />
        </Icon>
      </button>
    </div>
  </footer>
);

const Watermark = () => (
  <svg
    width="365"
    height="180"
    viewBox="0 0 365 180"
    className="pointer-events-none absolute bottom-[39px] right-[99px] z-10"
    stroke="#777"
    strokeOpacity="0.35"
    strokeWidth="2"
    paintOrder="stroke"
    aria-hidden="true"
  >
    <g fill="#fff" fillOpacity="0.72">
      <ellipse cx="139" cy="51" rx="13" ry="17" />
      <ellipse cx="164" cy="26" rx="12" ry="17" />
      <ellipse cx="195" cy="28" rx="13" ry="17" transform="rotate(12 195 28)" />
      <ellipse cx="215" cy="59" rx="13" ry="17" />
    </g>
    <g fill="#fff" fillOpacity="0.9">
      <path d="M177 53C190 53 196 66 206 77C216 87 221 92 221 102C221 114 213 120 202 120C192 120 187 118 177 118C167 118 160 120 150 120C139 120 132 112 132 101C132 90 141 84 149 76C158 66 163 53 177 53z" />
      <text x="2" y="118" fontSize="80" fontWeight="700" fontFamily="Liberation Sans, sans-serif">
        Bai
      </text>
      <text x="231" y="113" fontSize="60" fontWeight="900" fontFamily="Noto Sans CJK SC, sans-serif">
        经验
      </text>
      <text x="3" y="164" fontSize="44" fillOpacity="0.75" fontFamily="Liberation Sans, sans-serif">
        jingyan.baidu.com
      </text>
    </g>
    <text x="146" y="108" fontSize="47" fontWeight="700" fontFamily="Liberation Sans, sans-serif" fill="#f1f1f1">
      du
    </text>
  </svg>
);

const App: React.FC = () => {
  return (
    <div className="relative flex h-screen flex-col bg-[#fbfcff] pb-8 pl-4 pr-[15px] pt-[33px] font-['Noto_Sans_CJK_SC',sans-serif] text-[16px] font-light leading-6">
      <div className="flex flex-1 flex-col bg-[#f5f7f9] shadow-[0_0_6px_rgba(60,70,100,0.16)]">
        <header className="relative z-20 bg-white shadow-[0_1px_3px_rgba(60,70,100,0.16)]">
          <TopBar />
          <Ribbon />
        </header>
        <div className="flex min-h-0 flex-1">
          <SlidePanel />
          <main className="flex min-w-0 flex-1 flex-col">
            <div className="flex min-h-0 flex-1">
              <div className="flex min-w-0 flex-1 justify-center py-[54px]">
                <div className="aspect-[4/3] h-full bg-[#92d14f] shadow-[0_0_8px_rgba(0,0,0,0.15)]" />
              </div>
              <ScrollBar />
            </div>
            <div className="flex h-9 shrink-0 items-center gap-[6px] border-t-[3px] border-[#ebebef] bg-[#e7e7e7] pb-px pl-2 text-[18px] text-[#5a6782]">
              <Icon size={22}>
                <path d="M0 3h22M0 10h22M0 17h11M14 17h6M17 14v6" />
              </Icon>
              <span>单击此处添加备注</span>
            </div>
          </main>
          <SideRail />
        </div>
        <StatusBar />
      </div>
      <Watermark />
    </div>
  );
};

export default App;
